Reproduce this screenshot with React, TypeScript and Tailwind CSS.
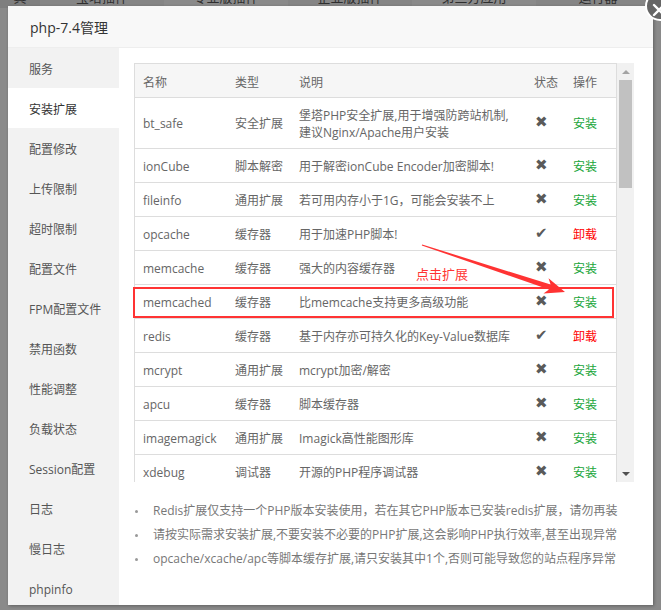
import React from 'react';

const menu = [
  '服务',
  '安装扩展',
  '配置修改',
  '上传限制',
  '超时限制',
  '配置文件',
  'FPM配置文件',
  '禁用函数',
  '性能调整',
  '负载状态',
  'Session配置',
  '日志',
  '慢日志',
  'phpinfo',
];

type Ext = {
  name: string;
  type: string;
  desc: string[];
  installed?: boolean;
};

const exts: Ext[] = [
  { name: 'bt_safe', type: '安全扩展', desc: ['堡塔PHP安全扩展,用于增强防跨站机制,', '建议Nginx/Apache用户安装'] },
  { name: 'ionCube', type: '脚本解密', desc: ['用于解密ionCube Encoder加密脚本!'] },
  { name: 'fileinfo', type: '通用扩展', desc: ['若可用内存小于1G，可能会安装不上'] },
  { name: 'opcache', type: '缓存器', desc: ['用于加速PHP脚本!'], installed: true },
  { name: 'memcache', type: '缓存器', desc: ['强大的内容缓存器'] },
  { name: 'memcached', type: '缓存器', desc: ['比memcache支持更多高级功能'] },
  { name: 'redis', type: '缓存器', desc: ['基于内存亦可持久化的Key-Value数据库'], installed: true },
  { name: 'mcrypt', type: '通用扩展', desc: ['mcrypt加密/解密'] },
  { name: 'apcu', type: '缓存器', desc: ['脚本缓存器'] },
  { name: 'imagemagick', type: '通用扩展', desc: ['Imagick高性能图形库'] },
  { name: 'xdebug', type: '调试器', desc: ['开源的PHP程序调试器'] },
];

const notes = [
  'Redis扩展仅支持一个PHP版本安装使用，若在其它PHP版本已安装redis扩展，请勿再装',
  '请按实际需求安装扩展,不要安装不必要的PHP扩展,这会影响PHP执行效率,甚至出现异常',
  'opcache/xcache/apc等脚本缓存扩展,请只安装其中1个,否则可能导致您的站点程序异常',
];

const bgTabs = ['真', '宝塔插件', '专业版插件', '企业版插件', '第三方应用', '运行器'];

const font = { fontFamily: '"Open Sans", "Noto Sans CJK SC", sans-serif' };

export default function App() {
  return (
    <div
      className="relative w-[661px] h-[610px] overflow-hidden bg-[#8a8a8a] text-[12px]"
      style={font}
    >
      {/* dimmed page behind the dialog */}
      <div className="flex h-[20px] -mt-[12px] text-[13px] text-[#2e2e2e]">
        {bgTabs.map((t, i) => (
          <div
            key={t}
            className={
              'flex items-center justify-center ' +
              (i === 0 ? 'w-[40px] bg-[#7f7f7f] ' : 'w-[124px] ') +
              (i % 2 === 1 ? 'bg-[#858585]' : '')
            }
          >
            {t}
          </div>
        ))}
      </div>

      {/* dialog */}
      <div className="absolute left-[8px] top-[6px] w-[645px] h-[599px] bg-white flex flex-col shadow-[1px_1px_3px_rgba(0,0,0,0.3)]">
        <div className="h-[42px] shrink-0 bg-[#f8f8f8] border-b border-[#eee] flex items-center pl-[22px] pt-[1px] text-[14px] text-[#333]">
          php-7.4管理
        </div>
        <div className="flex flex-1 min-h-0">
          <div className="w-[111px] shrink-0 bg-[#f2f2f2] flex flex-col">
            {menu.map((m, i) => (
              <div
                key={m}
                className={
                  'h-[40px] shrink-0 flex items-center pl-[21px] pt-[3px] ' +
                  (i === 1 ? 'bg-white text-[#333]' : 'text-[#555]')
                }
              >
                {m}
              </div>
            ))}
          </div>

          <div className="flex-1 pl-[15px] pt-[15px]">
            <div className="flex h-[419px] w-[500px] overflow-hidden">
              <div className="w-[483px] shrink-0 border border-[#ddd] border-b-0 self-start">
                <table className="w-full table-fixed border-collapse text-[#666] leading-[17px]">
                  <colgroup>
                    <col className="w-[91px]" />
                    <col className="w-[64px]" />
                    <col className="w-[235px]" />
                    <col className="w-[39px]" />
                    <col />
                  </colgroup>
                  <thead>
                    <tr className="h-[33px] bg-[#f6f6f6] border-b border-[#ddd] text-left">
                      <th className="font-normal pl-[8px] pt-[5px]">名称</th>
                      <th className="font-normal pl-[9px] pt-[5px]">类型</th>
                      <th className="font-normal pl-[9px] pt-[5px]">说明</th>
                      <th className="font-normal pl-[9px] pt-[5px]">状态</th>
                      <th className="font-normal pl-[9px] pt-[5px]">操作</th>
                    </tr>
                  </thead>
                  <tbody>
                    {exts.map((e) => (
                      <tr key={e.name} className="border-b border-[#ddd]">
                        <td className="pl-[8px] pt-[9px] pb-[7px]">{e.name}</td>
                        <td className="pl-[9px] pt-[9px] pb-[7px]">{e.type}</td>
                        <td className="pl-[9px] pt-[9px] pb-[7px]">
                          {e.desc.map((d) => (
                            <div key={d}>{d}</div>
                          ))}
                        </td>
                        <td
                          className="pl-[10px] pt-[8px] pb-[8px] text-[#5a5a5a] text-[15px]"
                          style={{ fontFamily: '"DejaVu Sans", sans-serif' }}
                        >
                          {e.installed ? '✔' : '✖'}
                        </td>
                        <td
                          className={
                            'pl-[9px] pt-[9px] pb-[7px] ' +
                            (e.installed ? 'text-[#f00]' : 'text-[#20a53a]')
                          }
                        >
                          {e.installed ? '卸载' : '安装'}
                        </td>
                      </tr>
                    ))}
                  </tbody>
                </table>
              </div>
              <div className="w-[17px] shrink-0 bg-[#f1f1f1] flex flex-col items-center">
                <div className="h-[17px] flex items-center justify-center">
                  <div className="w-0 h-0 border-x-[4px] border-x-transparent border-b-[4px] border-b-[#a3a3a3]" />
                </div>
                <div className="w-[13px] h-[108px] bg-[#c1c1c1]" />
                <div className="flex-1" />
                <div className="h-[17px] flex items-center justify-center">
                  <div className="w-0 h-0 border-x-[4px] border-x-transparent border-t-[4px] border-t-[#505050]" />
                </div>
              </div>
            </div>

            <ul className="mt-[16px] text-[#777]">
              {notes.map((n) => (
                <li key={n} className="flex items-center h-[24px] pt-[2px]">
                  <span className="w-[3px] h-[3px] rounded-full bg-[#999] ml-[1px] mr-[15px]" />
                  {n}
                </li>
              ))}
            </ul>
          </div>
        </div>
      </div>

      {/* close button */}
      <div className="absolute left-[645px] -top-[9px] w-[30px] h-[30px] rounded-full bg-[#666] border-2 border-white flex items-center justify-center">
        <svg width="14" height="14" viewBox="0 0 14 14" className="mt-[8px] -ml-[2px]">
          <path d="M2 2 L12 12 M12 2 L2 12" stroke="white" strokeWidth="2.4" strokeLinecap="round" />
        </svg>
      </div>

      {/* annotation */}
      <div className="absolute left-[133px] top-[287px] w-[481px] h-[31px] border-2 border-[#f33]" />
      <div className="absolute left-[416px] top-[265px] text-[13px] text-[#f33]">点击扩展</div>
      <svg className="absolute left-0 top-0 pointer-events-none" width="661" height="610">
        <polygon
          points="421.8,245.5 549,289.4 543.5,293.4 565,292 548.5,278.2 550.6,284.6 422.2,244.5"
          fill="#f33"
        />
      </svg>
    </div>
  );
}
